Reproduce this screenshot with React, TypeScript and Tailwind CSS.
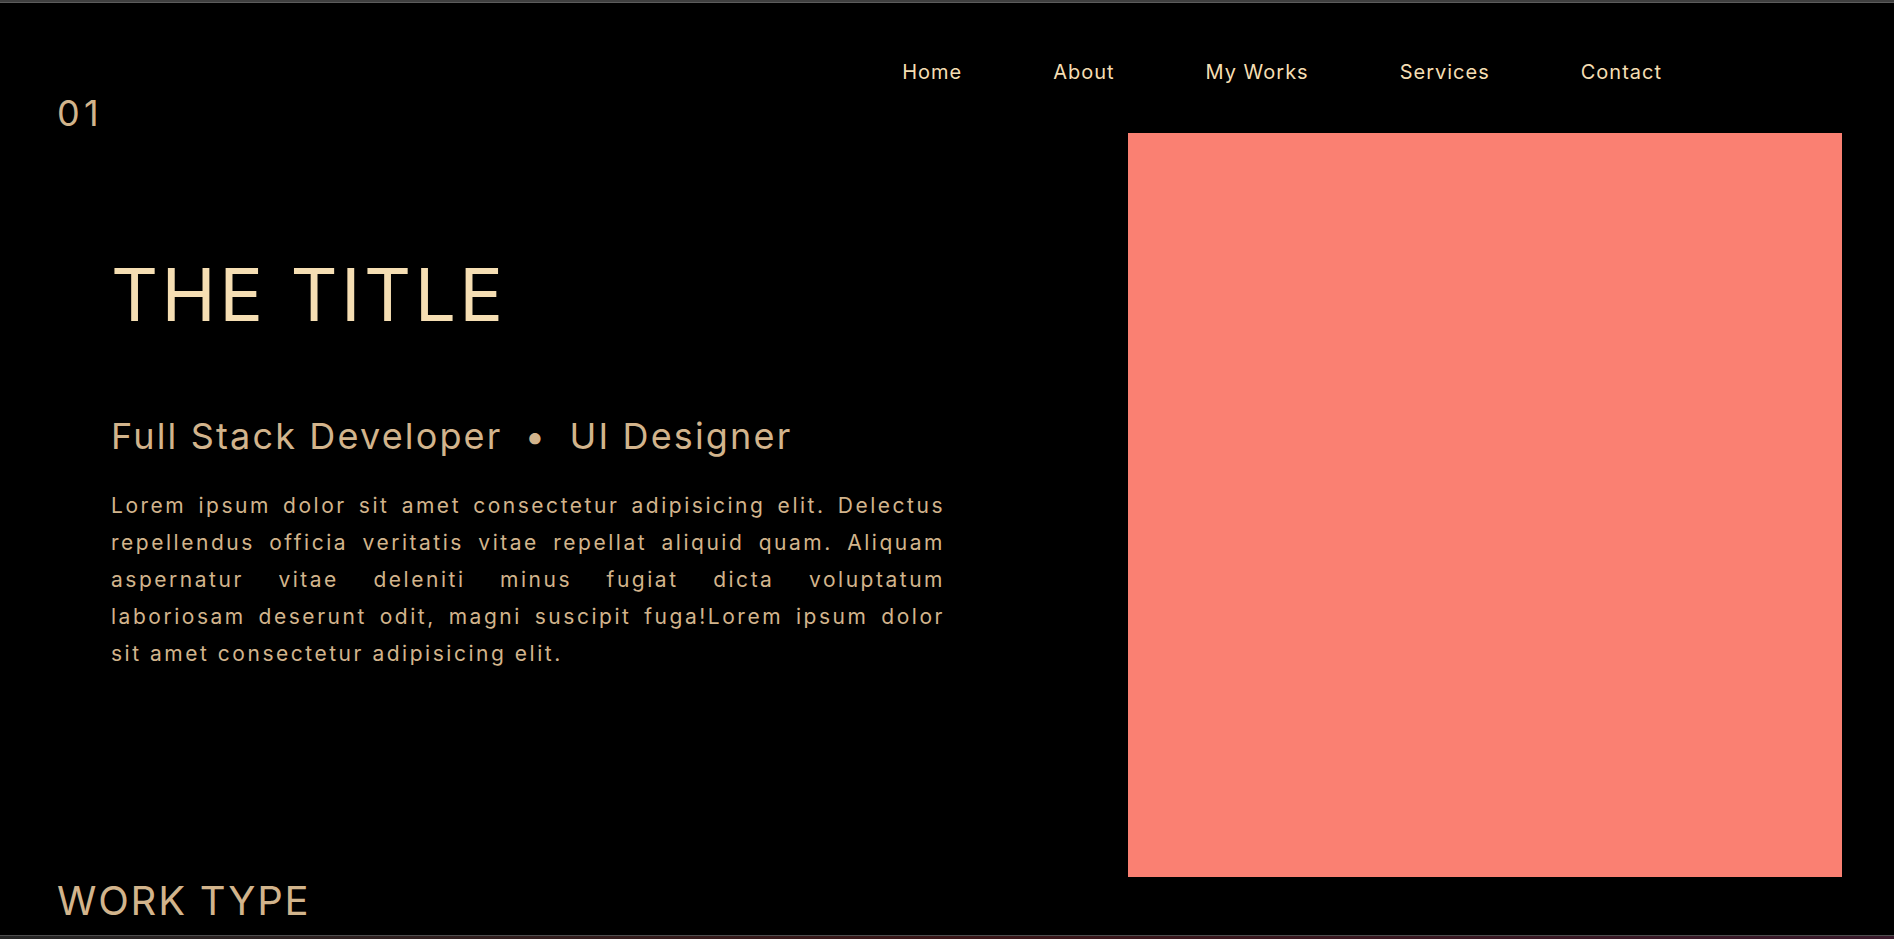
import React from "react";

const links = ["Home", "About", "My Works", "Services", "Contact"];

const lines = [
    "Lorem ipsum dolor sit amet consectetur adipisicing elit. Delectus",
    "repellendus officia veritatis vitae repellat aliquid quam. Aliquam",
    "aspernatur vitae deleniti minus fugiat dicta voluptatum",
    "laboriosam deserunt odit, magni suscipit fuga!Lorem ipsum dolor",
];

function App() {
    return (
        <div className="h-[939px] w-full flex flex-col bg-black overflow-hidden font-['Inter',sans-serif]">
            {/* window top edge */}
            <div className="h-[3px] bg-[#3f3f3f] border-b border-[#5c5c5c]"></div>

            <header className="flex justify-end pr-[232px] pt-[55px] gap-[91px]">
                {links.map((l) => (
                    <a key={l} className="text-[20px] leading-[28px] text-[#f5deb3] tracking-[0.05em] cursor-pointer">{l}</a>
                ))}
            </header>

            <main className="flex-1 flex items-start">
                <div className="flex-1 h-full flex flex-col pl-[57px] pb-[14px]">
                    <p className="mt-[9px] text-[36px] leading-none text-[#d2b48c] tracking-[0.12em]">01</p>
                    <div className="pl-[54px]">
                        <h1 className="mt-[127px] text-[73px] leading-none text-[#f5deb3] tracking-[0.047em]">THE TITLE</h1>
                        <h2 className="mt-[87px] text-[36px] leading-none text-[#d2b48c] tracking-[0.06em] whitespace-nowrap">
                            Full Stack Developer <span className="px-[10px]">•</span> UI Designer
                        </h2>
                        <p className="mt-[33px] w-[834px] text-[21px] leading-[37px] text-[#d2b48c] tracking-[0.12em]">
                            {lines.map((t) => (
                                <span key={t} className="block whitespace-nowrap text-justify [text-align-last:justify]">{t}</span>
                            ))}
                            <span className="block">sit amet consectetur adipisicing elit.</span>
                        </p>
                    </div>
                    <h3 className="mt-auto text-[40px] leading-none text-[#d2b48c] tracking-[0.045em]">WORK TYPE</h3>
                </div>
                <div className="mt-[47px] mr-[52px] w-[714px] h-[744px] bg-[#fa8072]"></div>
            </main>

            {/* window bottom edge */}
            <div className="h-[4px] border-t border-[#4e4e4e] bg-gradient-to-r from-[#262626] via-[#3a1618] to-[#3a1a2c]"></div>
        </div>
    );
}

export default App;
